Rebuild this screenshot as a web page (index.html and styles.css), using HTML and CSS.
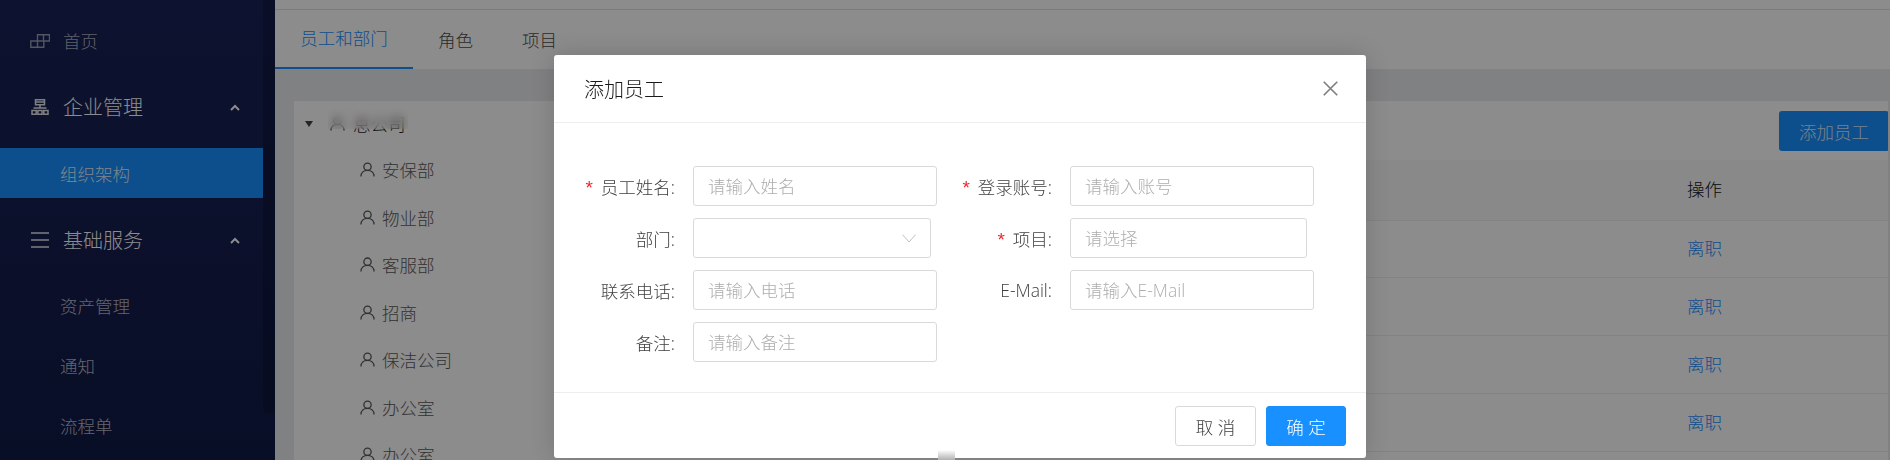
FILE: index.html
```html
<!DOCTYPE html>
<html lang="zh">
<head>
<meta charset="utf-8">
<title>添加员工</title>
<link rel="stylesheet" href="styles.css">
</head>
<body>
<div class="app">
  <aside class="sidebar">
    <nav class="nav">
      <a class="nav-item nav-home">
        <svg class="nav-icon" viewBox="0 0 20 14"><path d="M7.5 7V.8h12v6.2zM13.5.8v6.2M.8 7h13v6.2H.8zM7.5 7v6.2" fill="none" stroke="currentColor" stroke-width="1.4"/></svg>
        <span class="nav-label">首页</span>
      </a>
      <a class="nav-item nav-group">
        <svg class="nav-icon" viewBox="0 0 18 16"><path d="M4.5.8h9v5h-9zM4.5 3h9M9 6v3M2.5 9h13M1 11.5h4.2v3.8H1zM6.9 11.5h4.2v3.8H6.9zM12.8 11.5H17v3.8h-4.2z" fill="none" stroke="currentColor" stroke-width="1.5"/></svg>
        <span class="nav-label">企业管理</span>
        <svg class="nav-chevron" viewBox="0 0 10 7"><path d="M1 6l4-4 4 4" fill="none" stroke="currentColor" stroke-width="2"/></svg>
      </a>
      <a class="nav-item nav-sub nav-active">组织架构</a>
      <a class="nav-item nav-group">
        <svg class="nav-icon" viewBox="0 0 18 16"><path d="M0 1h18M0 8h18M0 15h18" fill="none" stroke="currentColor" stroke-width="1.6"/></svg>
        <span class="nav-label">基础服务</span>
        <svg class="nav-chevron" viewBox="0 0 10 7"><path d="M1 6l4-4 4 4" fill="none" stroke="currentColor" stroke-width="2"/></svg>
      </a>
      <a class="nav-item nav-sub nav-child">资产管理</a>
      <a class="nav-item nav-sub nav-child">通知</a>
      <a class="nav-item nav-sub nav-child">流程单</a>
    </nav>
    <div class="nav-scroll"></div>
  </aside>

  <main class="main">
    <div class="tabs">
      <a class="tab tab-active">员工和部门</a>
      <a class="tab">角色</a>
      <a class="tab">项目</a>
    </div>
    <section class="panel">
      <div class="tree">
        <div class="tree-root">
          <span class="tree-caret"></span>
          <svg class="user-icon" viewBox="0 0 16 16"><circle cx="8" cy="5" r="3.9" fill="none" stroke="currentColor" stroke-width="1.4"/><path d="M1 15.5c0-4 3-6.6 7-6.6s7 2.6 7 6.6" fill="none" stroke="currentColor" stroke-width="1.4"/></svg>
          <span>总公司</span>
          <span class="tree-blur"></span>
        </div>
        <div class="tree-node"><svg class="user-icon" viewBox="0 0 16 16"><circle cx="8" cy="5" r="3.9" fill="none" stroke="currentColor" stroke-width="1.4"/><path d="M1 15.5c0-4 3-6.6 7-6.6s7 2.6 7 6.6" fill="none" stroke="currentColor" stroke-width="1.4"/></svg>安保部</div>
        <div class="tree-node"><svg class="user-icon" viewBox="0 0 16 16"><circle cx="8" cy="5" r="3.9" fill="none" stroke="currentColor" stroke-width="1.4"/><path d="M1 15.5c0-4 3-6.6 7-6.6s7 2.6 7 6.6" fill="none" stroke="currentColor" stroke-width="1.4"/></svg>物业部</div>
        <div class="tree-node"><svg class="user-icon" viewBox="0 0 16 16"><circle cx="8" cy="5" r="3.9" fill="none" stroke="currentColor" stroke-width="1.4"/><path d="M1 15.5c0-4 3-6.6 7-6.6s7 2.6 7 6.6" fill="none" stroke="currentColor" stroke-width="1.4"/></svg>客服部</div>
        <div class="tree-node"><svg class="user-icon" viewBox="0 0 16 16"><circle cx="8" cy="5" r="3.9" fill="none" stroke="currentColor" stroke-width="1.4"/><path d="M1 15.5c0-4 3-6.6 7-6.6s7 2.6 7 6.6" fill="none" stroke="currentColor" stroke-width="1.4"/></svg>招商</div>
        <div class="tree-node"><svg class="user-icon" viewBox="0 0 16 16"><circle cx="8" cy="5" r="3.9" fill="none" stroke="currentColor" stroke-width="1.4"/><path d="M1 15.5c0-4 3-6.6 7-6.6s7 2.6 7 6.6" fill="none" stroke="currentColor" stroke-width="1.4"/></svg>保洁公司</div>
        <div class="tree-node"><svg class="user-icon" viewBox="0 0 16 16"><circle cx="8" cy="5" r="3.9" fill="none" stroke="currentColor" stroke-width="1.4"/><path d="M1 15.5c0-4 3-6.6 7-6.6s7 2.6 7 6.6" fill="none" stroke="currentColor" stroke-width="1.4"/></svg>办公室</div>
        <div class="tree-node"><svg class="user-icon" viewBox="0 0 16 16"><circle cx="8" cy="5" r="3.9" fill="none" stroke="currentColor" stroke-width="1.4"/><path d="M1 15.5c0-4 3-6.6 7-6.6s7 2.6 7 6.6" fill="none" stroke="currentColor" stroke-width="1.4"/></svg>办公室</div>
      </div>
      <div class="staff">
        <div class="toolbar"><button class="btn-add" type="button">添加员工</button></div>
        <table class="table">
          <thead><tr><th></th><th class="col-op">操作</th></tr></thead>
          <tbody>
            <tr><td></td><td class="col-op"><a class="link">离职</a></td></tr>
            <tr><td></td><td class="col-op"><a class="link">离职</a></td></tr>
            <tr><td></td><td class="col-op"><a class="link">离职</a></td></tr>
            <tr><td></td><td class="col-op"><a class="link">离职</a></td></tr>
          </tbody>
        </table>
      </div>
    </section>
  </main>
</div>

<div class="mask"></div>

<div class="modal">
  <header class="modal-head">
    <h2 class="modal-title">添加员工</h2>
    <svg class="modal-close" viewBox="0 0 14 14"><path d="M.7.7l12.6 12.6M13.3.7L.7 13.3" fill="none" stroke="currentColor" stroke-width="1.6"/></svg>
  </header>
  <form class="form">
    <label class="field"><span class="field-label"><i class="req">*</i>员工姓名:</span><input class="input" placeholder="请输入姓名"></label>
    <label class="field"><span class="field-label"><i class="req">*</i>登录账号:</span><input class="input" placeholder="请输入账号"></label>
    <label class="field"><span class="field-label">部门:</span>
      <span class="input select">
        <svg class="select-arrow" viewBox="0 0 14 9"><path d="M.5.7L7 8l6.5-7.3" fill="none" stroke="currentColor" stroke-width="1"/></svg>
      </span></label>
    <label class="field"><span class="field-label"><i class="req">*</i>项目:</span><input class="input input-short" placeholder="请选择"></label>
    <label class="field"><span class="field-label">联系电话:</span><input class="input" placeholder="请输入电话"></label>
    <label class="field"><span class="field-label">E-Mail:</span><input class="input" placeholder="请输入E-Mail"></label>
    <label class="field"><span class="field-label">备注:</span><input class="input" placeholder="请输入备注"></label>
  </form>
  <footer class="modal-foot">
    <button class="btn" type="button">取 消</button>
    <button class="btn btn-primary" type="button">确 定</button>
  </footer>
  <div class="scroll-fade"></div>
</div>
</body>
</html>
```

FILE: styles.css
```css
* { box-sizing: border-box; }
html, body { margin: 0; height: 460px; overflow: hidden; }
body {
  font-family: "Open Sans", "Noto Sans CJK SC", sans-serif;
  font-size: 17.5px;
  font-weight: 300;
  color: #4d4d4d;
  background: #fff;
}
a { text-decoration: none; }

.app { display: flex; height: 460px; }

/* sidebar */
.sidebar {
  width: 275px;
  flex: none;
  display: flex;
  background: linear-gradient(#182157, #121b48);
}
.nav { width: 263px; flex: none; padding-top: 16px; }
.nav-scroll {
  width: 12px;
  height: 414px;
  background: rgba(0, 0, 0, .18);
  border-radius: 0 0 6px 6px;
}
.nav-item {
  display: flex;
  align-items: center;
  height: 50px;
  margin-bottom: 16px;
  color: rgba(255, 255, 255, .7);
}
.nav-home { padding-left: 30px; color: rgba(255,255,255,.65); }
.nav-home .nav-icon { width: 20px; height: 14px; margin-right: 13px; opacity: .85; }
.nav-group {
  padding-left: 31px;
  font-size: 20px;
  color: #fff;
}
.nav-group .nav-icon { width: 18px; height: 16px; margin-right: 14px; opacity: .9; }
.nav-label { flex: 1; padding-bottom: 2px; }
.nav-chevron { width: 10px; height: 7px; margin-right: 23px; }
.nav-sub { padding-left: 60px; }
.nav-child { margin-bottom: 11px; margin-top: -1px; }
.nav-active { background: #1890ff; color: rgba(255,255,255,.9); margin-bottom: 17px; }

/* main */
.main { flex: 1; min-width: 0; background: #e9ebee; display: flex; flex-direction: column; }
.tabs {
  height: 69px;
  flex: none;
  display: flex;
  background: #fff;
  padding-top: 10px;
  position: relative;
}
.tabs::before {
  content: "";
  position: absolute;
  left: 0; right: 0; top: 9px;
  height: 1px;
  background: #e0e0e0;
}
.tab {
  display: flex;
  align-items: center;
  padding: 0 26px;
  height: 59px;
  color: #4d4d4d;
}
.tab-active {
  color: #1890ff;
  border-bottom: 2px solid #1890ff;
  padding: 0 0 2px;
  width: 138px;
  justify-content: center;
}
.tab:nth-child(2) { padding-left: 25px; padding-right: 25px; }
.tab:nth-child(3) { padding-left: 24px; }

.panel {
  flex: 1;
  display: flex;
  min-height: 0;
  margin: 32px 2px 0 19px;
  background: #fff;
  overflow: hidden;
}
.tree { width: 266px; flex: none; }
.tree-root {
  position: relative;
  display: flex;
  align-items: center;
  height: 45px;
  padding-left: 36px;
  color: #222;
  gap: 8px;
}
.tree-caret {
  position: absolute;
  left: 11px;
  top: 20px;
  border-left: 4px solid transparent;
  border-right: 4px solid transparent;
  border-top: 6px solid #444;
}
.tree-blur {
  position: absolute;
  left: 34px;
  top: 8px;
  width: 80px;
  height: 20px;
  backdrop-filter: blur(5px);
}
.tree-root .user-icon { margin: 0; }
.tree-node {
  display: flex;
  align-items: center;
  height: 47.5px;
  padding-left: 66px;
  color: #5a5a5a;
  white-space: nowrap;
}
.user-icon { width: 15px; height: 15px; flex: none; margin-right: 7px; color: #5a5a5a; }

.staff { flex: 1; min-width: 0; display: flex; flex-direction: column; }
.toolbar { height: 59px; display: flex; justify-content: flex-end; padding-top: 10px; margin-right: -1px; }
.btn-add {
  width: 110px;
  height: 40px;
  border: 0;
  border-radius: 3px;
  background: #1890ff;
  color: rgba(255,255,255,.85);
  font: inherit;
}
.table { width: 100%; border-collapse: collapse; table-layout: fixed; }
.table th, .table td { padding: 0 0 2px; border-bottom: 1px solid #eee; }
.table th { height: 60px; background: #fafafa; font-weight: 300; color: #111; text-align: left; }
.table td { height: 57.9px; }
.col-op { width: 201px; }
.table .link { color: #1890ff; }

/* overlay */
.mask { position: fixed; inset: 0; background: rgba(0, 0, 0, .45); }

.modal {
  position: absolute;
  left: 554px;
  top: 55px;
  width: 812px;
  height: 403px;
  background: #fff;
  border-radius: 3px;
  box-shadow: 0 0 24px rgba(0, 0, 0, .16);
  display: flex;
  flex-direction: column;
}
.modal-head {
  height: 68px;
  flex: none;
  display: flex;
  align-items: center;
  justify-content: space-between;
  padding: 0 28px 0 30px;
  border-bottom: 1px solid #eee;
}
.modal-title { margin: 0; font-size: 20px; font-weight: 300; color: #1a1a1a; }
.modal-close { width: 15px; height: 15px; color: #808080; }

.form {
  flex: 1;
  display: grid;
  grid-template-columns: 377px 1fr;
  grid-auto-rows: 40px;
  row-gap: 12px;
  padding: 43px 0 0 30px;
}
.field { display: flex; align-items: center; }
.field-label {
  width: 109px;
  flex: none;
  padding-right: 18px;
  text-align: right;
  color: #404040;
  white-space: nowrap;
}
.req {
  font-style: normal;
  color: #f5222d;
  margin-right: 8px;
  font-family: "Liberation Sans", sans-serif;
  font-size: 19px;
  line-height: 1;
}
.input {
  display: block;
  width: 244px;
  height: 40px;
  padding: 0 14px;
  border: 1px solid #d9d9d9;
  border-radius: 3px;
  background: #fff;
  font: inherit;
  outline: 0;
}
.input::placeholder { color: #adadad; opacity: 1; }
.input-short { width: 237px; }
.select { width: 238px; position: relative; }
.select-arrow {
  position: absolute;
  right: 14px;
  top: 15px;
  width: 14px;
  height: 9px;
  color: #bfbfbf;
}

.modal-foot {
  flex: none;
  height: 66px;
  display: flex;
  justify-content: flex-end;
  align-items: flex-start;
  gap: 10px;
  padding: 13px 20px 0 0;
  border-top: 1px solid #eee;
}
.btn {
  width: 81px;
  height: 40px;
  border: 1px solid #d9d9d9;
  border-radius: 3px;
  background: #fff;
  color: #404040;
  font: inherit;
  padding: 0;
}
.btn-primary { width: 80px; border-color: #1890ff; background: #1890ff; color: #fff; }

.scroll-fade {
  position: absolute;
  left: 384px;
  top: 395px;
  width: 17px;
  height: 10px;
  background: linear-gradient(#fff, #b0b0b0);
}
```
